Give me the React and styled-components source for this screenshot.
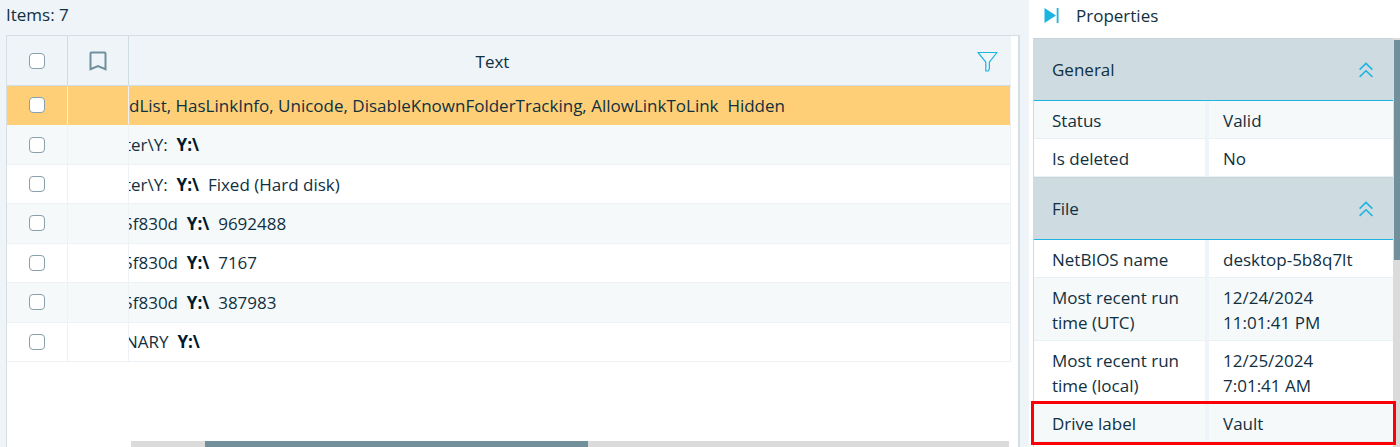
import React from "react";
import styled, { createGlobalStyle } from "styled-components";

const GlobalStyle = createGlobalStyle`
  * {
    box-sizing: border-box;
  }

  body {
    margin: 0;
    background-color: #eef4f7;
    color: #10303f;
    font-family: "Open Sans", "Noto Sans", sans-serif;
    font-size: 17px;
    line-height: 25px;
  }
`;

const Page = styled.div`
  display: flex;
  height: 100vh;
  overflow: hidden;
`;

const Items = styled.main`
  flex: 1;
  min-width: 0;
  display: flex;
  flex-direction: column;
  padding: 0 9px 0 6px;
`;

const Count = styled.div`
  padding: 2px 0 8px;
`;

const Grid = styled.div`
  flex: 1;
  display: flex;
  flex-direction: column;
  justify-content: space-between;
  background-color: white;
  border: 2px solid #d3dfe4;
  border-width: 1px 2px 0 1px;
  padding-right: 7px;
`;

const GridTable = styled.table`
  width: 100%;
  height: 326px;
  table-layout: fixed;
  border-collapse: separate;
  border-spacing: 0;
`;

const NarrowCol = styled.col`
  width: 61px;
`;

const Th = styled.th`
  height: 50px;
  padding: 1px 0 0;
  background-color: #eef4f7;
  border-right: ${({ $last }) => ($last ? "0" : "1px solid #cfdce1")};
  border-bottom: 1px solid #d3dfe4;
  font-weight: 400;
  text-align: center;
`;

const HeadLine = styled.div`
  display: flex;
  align-items: center;
  justify-content: center;
`;

const TextHead = styled.div`
  display: grid;
  grid-template-columns: 1fr auto 1fr;
  align-items: center;
  padding: 0 13px 0 0;
`;

const HeadTitle = styled.span`
  grid-column: 2;
  padding: 1px 142px 0 0;
`;

const IconButton = styled.button`
  display: flex;
  padding: 0;
  border: 0;
  background: none;
  color: #1db4e2;
  justify-self: end;
  cursor: pointer;
`;

const Row = styled.tr`
  background-color: ${({ $selected }) => ($selected ? "#fecf76" : "white")};

  &:nth-child(even) {
    background-color: #f5f9fa;
  }
`;

const Td = styled.td`
  height: 39px;
  padding: 0;
  border-right: 1px solid #ecf2f5;
  border-bottom: 1px solid ${({ $selected }) => ($selected ? "#fecf76" : "#ecf2f5")};
  overflow: hidden;
  white-space: pre;
`;

const Check = styled.input.attrs({ type: "checkbox" })`
  appearance: none;
  display: block;
  width: 16px;
  height: 16px;
  margin: 0 auto;
  background-color: white;
  border: 1px solid #87a0ab;
  border-radius: 4px;

  &:checked {
    background-color: #1db4e2;
  }
`;

// the column is scrolled, so every line starts behind its left edge
const Scrolled = styled.div`
  margin-left: -${({ $by }) => $by}px;
`;

const Hit = styled.b`
  font-weight: 700;
  color: #001a2b;
`;

const HTrack = styled.div`
  height: 6px;
  margin: 0 2px 0 124px;
  background-color: #dbdbdb;
`;

const HThumb = styled.div`
  width: 43.6%;
  height: 100%;
  margin-left: 8.4%;
  background-color: #72909b;
`;

const Panel = styled.aside`
  width: 371px;
  display: flex;
  flex-direction: column;
  background-color: white;
  padding-left: 4px;
`;

const PanelTitle = styled.div`
  display: flex;
  align-items: center;
  gap: 17px;
  height: 38px;
  padding: 0 0 8px 11px;
`;

const PanelBody = styled.div`
  flex: 1;
  min-height: 0;
  display: flex;
`;

const Sections = styled.div`
  flex: 1;
  border-left: 1px solid #cddae0;
`;

const SectionHead = styled.div`
  display: flex;
  align-items: center;
  justify-content: space-between;
  height: 63px;
  padding: 0 20px 0 18px;
  background-color: #cedbe1;
  border-top: 1px solid #c8d5da;
  border-bottom: 1px solid #1db4e2;
`;

const PropTable = styled.table`
  width: 100%;
  table-layout: fixed;
  border-collapse: separate;
  border-spacing: 0;
`;

const PropCol = styled.col`
  width: 175px;
`;

const PropRow = styled.tr`
  background-color: ${({ $tint }) => ($tint ? "#f5f9fa" : "white")};
  ${({ $marked }) =>
    $marked &&
    `
    position: relative;
    z-index: 1;
    outline: 3px solid #fb0007;
  `}
`;

const PropName = styled.th`
  padding: 7px 16px 5px 18px;
  border-right: 4px solid #eef4f7;
  border-bottom: 1px solid #eaf1f4;
  font-weight: 400;
  text-align: left;
  vertical-align: top;
`;

const PropValue = styled.td`
  padding: 7px 32px 5px 14px;
  border-bottom: 1px solid #eaf1f4;
  vertical-align: top;
`;

const VTrack = styled.div`
  width: 7px;
  padding: 2px 0 0 1px;
  background-color: #dbdbdb;
`;

const VThumb = styled.div`
  height: 54%;
  background-color: #72909b;
`;

const rows = [
  { cut: 0, before: "dList, HasLinkInfo, Unicode, DisableKnownFolderTracking, AllowLinkToLink  Hidden", selected: true },
  { cut: 4, before: "ter\\Y:  ", hit: "Y:\\" },
  { cut: 4, before: "ter\\Y:  ", hit: "Y:\\", after: "  Fixed (Hard disk)" },
  { cut: 6, before: "5f830d  ", hit: "Y:\\", after: "  9692488" },
  { cut: 6, before: "5f830d  ", hit: "Y:\\", after: "  7167" },
  { cut: 6, before: "5f830d  ", hit: "Y:\\", after: "  387983" },
  { cut: 4, before: "NARY  ", hit: "Y:\\" },
];

const sections = [
  {
    title: "General",
    props: [
      { name: "Status", value: "Valid", tint: true },
      { name: "Is deleted", value: "No" },
    ],
  },
  {
    title: "File",
    props: [
      { name: "NetBIOS name", value: "desktop-5b8q7lt" },
      { name: "Most recent run time (UTC)", value: "12/24/2024 11:01:41 PM", tint: true },
      { name: "Most recent run time (local)", value: "12/25/2024 7:01:41 AM" },
      { name: "Drive label", value: "Vault", tint: true, marked: true },
    ],
  },
];

const BookmarkIcon = () => (
  <svg width="18" height="20" viewBox="0 0 18 20" fill="none" stroke="#6f909d" strokeWidth="2">
    <path d="M1.5 18.2V2.5a1 1 0 0 1 1-1h13a1 1 0 0 1 1 1v15.7L9 15z" />
  </svg>
);

const FilterIcon = () => (
  <svg width="21" height="21" viewBox="0 0 21 21" fill="none" stroke="currentColor" strokeWidth="1.2" strokeLinejoin="round">
    <path d="M1 1.5h19l-7.6 9.7v6.6l-1.2 2.2H8.8v-8.8z" />
  </svg>
);

const CollapseIcon = () => (
  <svg width="14" height="16" viewBox="0 0 14 16" fill="none" stroke="currentColor" strokeWidth="1.5">
    <path d="M.6 7.6 7 1.4l6.4 6.2M.6 14.9 7 8.7l6.4 6.2" />
  </svg>
);

const HidePanelIcon = () => (
  <svg width="15" height="15" viewBox="0 0 15 15" fill="currentColor">
    <path d="M.5 0 12 7.4.5 15zM12.7 0h1.8v15h-1.8z" />
  </svg>
);

const ItemsTable = () => (
  <GridTable>
    <colgroup>
      <NarrowCol />
      <NarrowCol />
      <col />
    </colgroup>
    <thead>
      <tr>
        <Th>
          <Check aria-label="Select all" />
        </Th>
        <Th>
          <HeadLine>
            <BookmarkIcon />
          </HeadLine>
        </Th>
        <Th $last>
          <TextHead>
            <HeadTitle>Text</HeadTitle>
            <IconButton aria-label="Filter">
              <FilterIcon />
            </IconButton>
          </TextHead>
        </Th>
      </tr>
    </thead>
    <tbody>
      {rows.map((row, i) => (
        <Row key={i} $selected={row.selected}>
          <Td $selected={row.selected}>
            <Check aria-label={`Select item ${i + 1}`} />
          </Td>
          <Td $selected={row.selected} />
          <Td $selected={row.selected}>
            <Scrolled $by={row.cut}>
              {row.before}
              {row.hit && <Hit>{row.hit}</Hit>}
              {row.after}
            </Scrolled>
          </Td>
        </Row>
      ))}
    </tbody>
  </GridTable>
);

const Section = ({ title, props }) => (
  <section>
    <SectionHead>
      {title}
      <IconButton aria-label={`Collapse ${title}`}>
        <CollapseIcon />
      </IconButton>
    </SectionHead>
    <PropTable>
      <colgroup>
        <PropCol />
        <col />
      </colgroup>
      <tbody>
        {props.map(({ name, value, tint, marked }) => (
          <PropRow key={name} $tint={tint} $marked={marked}>
            <PropName scope="row">{name}</PropName>
            <PropValue>{value}</PropValue>
          </PropRow>
        ))}
      </tbody>
    </PropTable>
  </section>
);

const App = () => (
  <>
    <GlobalStyle />
    <Page>
      <Items>
        <Count>Items: 7</Count>
        <Grid>
          <ItemsTable />
          <HTrack>
            <HThumb />
          </HTrack>
        </Grid>
      </Items>
      <Panel>
        <PanelTitle>
          <IconButton aria-label="Hide properties">
            <HidePanelIcon />
          </IconButton>
          Properties
        </PanelTitle>
        <PanelBody>
          <Sections>
            {sections.map((section) => (
              <Section key={section.title} {...section} />
            ))}
          </Sections>
          <VTrack>
            <VThumb />
          </VTrack>
        </PanelBody>
      </Panel>
    </Page>
  </>
);

export default App;
